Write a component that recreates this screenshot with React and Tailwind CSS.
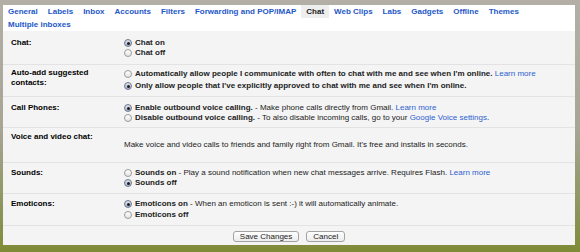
import React from 'react';

const tabs = [
  'General', 'Labels', 'Inbox', 'Accounts', 'Filters', 'Forwarding and POP/IMAP',
  'Chat', 'Web Clips', 'Labs', 'Gadgets', 'Offline', 'Themes', 'Multiple inboxes',
];

function Radio({ checked }) {
  return checked ? (
    <span className="mr-[3px] flex h-[8px] w-[8px] shrink-0 items-center justify-center rounded-full border border-[#6f7891] bg-linear-to-b from-[#dfe3ee] to-[#a9b2c8]">
      <span className="h-[3px] w-[3px] rounded-full bg-[#1d1d1d]" />
    </span>
  ) : (
    <span className="mr-[3px] h-[8px] w-[8px] shrink-0 rounded-full border border-[#9b9b9b] bg-linear-to-b from-white to-[#e4e4e4]" />
  );
}

function Option({ checked, children, lh = 'h-[10px]' }) {
  return (
    <div className={`flex items-center ${lh}`}>
      <Radio checked={checked} />
      <span className="whitespace-nowrap">{children}</span>
    </div>
  );
}

function Link({ children }) {
  return <span className="font-normal text-[#2f62d0]">{children}</span>;
}

function Row({ label, pad, children, last }) {
  return (
    <div className={`flex ${pad} ${last ? '' : 'border-b border-[#e3e3e3]'}`}>
      <div className="w-[120px] shrink-0 pl-[8px] font-bold leading-[10px] text-black">{label}</div>
      <div className="pl-[1px] text-[#222]">{children}</div>
    </div>
  );
}

export default function App() {
  return (
    <div
      className="h-[252px] w-[580px] overflow-hidden bg-linear-to-b from-[#b3afa6] via-[#a8a596] to-[#7f8b36] pt-[5px] pl-[3px] text-[8px]"
      style={{ fontFamily: '"Liberation Sans", Arial, sans-serif' }}
    >
      <div className="flex h-[240px] w-[572px] flex-col bg-[#f4f4f4]">
        <div className="flex flex-wrap bg-white">
          {tabs.map((t) => (
            <span
              key={t}
              className={`px-[5px] font-bold leading-[13px] ${t === 'Chat' ? 'bg-[#eeeeee] text-[#222]' : 'text-[#2457c8]'}`}
            >
              {t}
            </span>
          ))}
        </div>

        <Row label="Chat:" pad="pt-[7px] pb-[6px]">
          <Option checked><b>Chat on</b></Option>
          <Option><b>Chat off</b></Option>
        </Row>

        <Row label={<>Auto-add suggested<br />contacts:</>} pad="pt-[3px] pb-[4px]">
          <Option lh="h-[12px]">
            <b>Automatically allow people I communicate with often to chat with me and see when I'm online.</b>{' '}
            <Link>Learn more</Link>
          </Option>
          <Option checked lh="h-[12px]">
            <b>Only allow people that I've explicitly approved to chat with me and see when I'm online.</b>
          </Option>
        </Row>

        <Row label="Call Phones:" pad="pt-[6px] pb-[4px]">
          <Option checked>
            <b>Enable outbound voice calling.</b> - Make phone calls directly from Gmail. <Link>Learn more</Link>
          </Option>
          <Option>
            <b>Disable outbound voice calling.</b> - To also disable incoming calls, go to your{' '}
            <Link>Google Voice settings</Link>.
          </Option>
        </Row>

        <Row label="Voice and video chat:" pad="pt-[4px] pb-[12px]">
          <div className="mt-[8px] leading-[10px] whitespace-nowrap">
            Make voice and video calls to friends and family right from Gmail. It's free and installs in seconds.
          </div>
        </Row>

        <Row label="Sounds:" pad="pt-[5px] pb-[5px]">
          <Option>
            <b>Sounds on</b> - Play a sound notification when new chat messages arrive. Requires Flash.{' '}
            <Link>Learn more</Link>
          </Option>
          <Option checked><b>Sounds off</b></Option>
        </Row>

        <Row label="Emoticons:" pad="pt-[5px] pb-[5px]">
          <Option checked lh="h-[10.5px]">
            <b>Emoticons on</b> - When an emoticon is sent :-) it will automatically animate.
          </Option>
          <Option lh="h-[10.5px]"><b>Emoticons off</b></Option>
        </Row>

        <div className="flex justify-center gap-[7px] pt-[5px]">
          <button className="h-[11px] rounded-[3px] border border-[#a3a3a3] bg-linear-to-b from-white to-[#ececec] px-[6px] leading-[9px] text-[#222]">
            Save Changes
          </button>
          <button className="h-[11px] rounded-[3px] border border-[#a3a3a3] bg-linear-to-b from-white to-[#ececec] px-[6px] leading-[9px] text-[#222]">
            Cancel
          </button>
        </div>
      </div>
    </div>
  );
}
